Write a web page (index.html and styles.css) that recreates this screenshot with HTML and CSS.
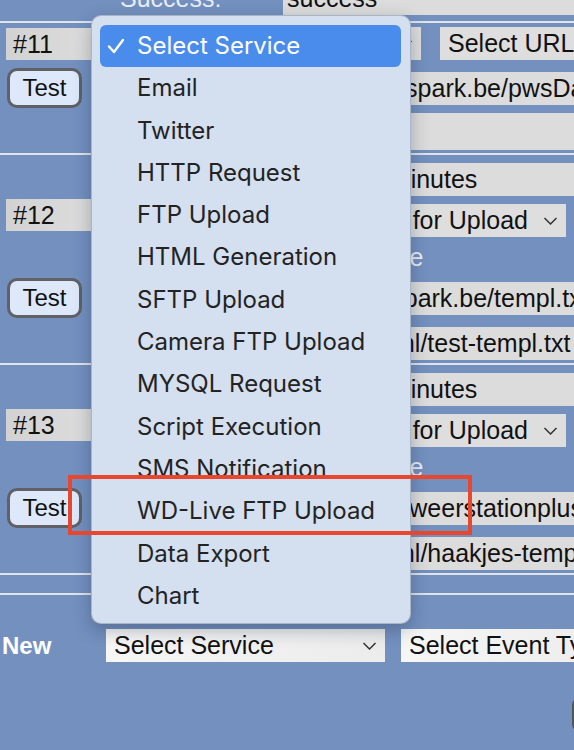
FILE: index.html
```html
<!DOCTYPE html>
<html lang="en">
<head>
  <meta charset="UTF-8">
  <title>Services</title>
  <link rel="stylesheet" href="styles.css">
</head>
<body>
  <div class="page">
    <div class="row row-top">
      <div class="side"></div>
      <div class="main">
        <span class="label">Success:</span>
        <span class="field">success</span>
      </div>
    </div>
    <div class="sep first"></div>

    <!-- #11 : service not chosen yet -->
    <section class="entry">
      <div class="row row-head">
        <div class="side"><span class="num">#11</span></div>
        <div class="main inline">
          <div class="select" style="width: 315px">Select Service
            <svg viewBox="0 0 14 8"><polyline points="1,1 7,7 13,1"/></svg></div>
          <div class="select" style="width: 200px">Select URL
            <svg viewBox="0 0 14 8"><polyline points="1,1 7,7 13,1"/></svg></div>
        </div>
      </div>
      <div class="row row-test">
        <div class="side"><button class="test">Test</button></div>
        <div class="main"><span class="field">ftp://meteospark.be/pwsDashboard/</span></div>
      </div>
      <div class="row row-blank">
        <div class="side"></div>
        <div class="main"><span class="field blank"></span></div>
      </div>
    </section>
    <div class="sep"></div>

    <section class="entry">
      <div class="row row-interval">
        <div class="side"></div>
        <div class="main">
          <span class="label">Interval:</span>
          <span class="field">every 10 minutes</span>
        </div>
      </div>
      <div class="row row-head tall">
        <div class="side"><span class="num">#12</span></div>
        <div class="main inline">
          <div class="select" style="width: 156px">FTP Upload
            <svg viewBox="0 0 14 8"><polyline points="1,1 7,7 13,1"/></svg></div>
          <div class="select" style="width: 285px">Select File for Upload
            <svg viewBox="0 0 14 8"><polyline points="1,1 7,7 13,1"/></svg></div>
        </div>
      </div>
      <div class="row row-note">
        <div class="side"></div>
        <div class="main"><span class="note">Template file</span></div>
      </div>
      <div class="row row-test">
        <div class="side"><button class="test">Test</button></div>
        <div class="main"><span class="field">ftp.meteospark.be/templ.txt</span></div>
      </div>
      <div class="row row-file">
        <div class="side"></div>
        <div class="main"><span class="field">/pi/web/html/test-templ.txt</span></div>
      </div>
    </section>
    <div class="sep"></div>

    <section class="entry">
      <div class="row row-interval">
        <div class="side"></div>
        <div class="main">
          <span class="label">Interval:</span>
          <span class="field">every 15 minutes</span>
        </div>
      </div>
      <div class="row row-head tall">
        <div class="side"><span class="num">#13</span></div>
        <div class="main inline">
          <div class="select" style="width: 156px">FTP Upload
            <svg viewBox="0 0 14 8"><polyline points="1,1 7,7 13,1"/></svg></div>
          <div class="select" style="width: 285px">Select File for Upload
            <svg viewBox="0 0 14 8"><polyline points="1,1 7,7 13,1"/></svg></div>
        </div>
      </div>
      <div class="row row-note">
        <div class="side"></div>
        <div class="main"><span class="note">Template file</span></div>
      </div>
      <div class="row row-test">
        <div class="side"><button class="test">Test</button></div>
        <div class="main"><span class="field">http://www.weerstationplus.be/upload/</span></div>
      </div>
      <div class="row row-file">
        <div class="side"></div>
        <div class="main"><span class="field">/pi/web/html/haakjes-template.txt</span></div>
      </div>
    </section>
    <div class="sep"></div>
    <div class="sep last"></div>

    <div class="row row-new">
      <div class="side"><span class="new">New</span></div>
      <div class="main inline gap-new">
        <div class="select light" style="width: 279px">Select Service
          <svg viewBox="0 0 14 8"><polyline points="1,1 7,7 13,1"/></svg></div>
        <div class="select light" style="width: 220px">Select Event Type</div>
      </div>
    </div>
    <div class="actions"><button class="test add">Add</button></div>
  </div>

  <!-- open service popup -->
  <ul class="menu">
    <li class="current">
      <svg class="check" viewBox="0 0 18 16"><polyline points="2,8.5 7,14 16,2"/></svg>
      Select Service
    </li>
    <li>Email</li>
    <li>Twitter</li>
    <li>HTTP Request</li>
    <li>FTP Upload</li>
    <li>HTML Generation</li>
    <li>SFTP Upload</li>
    <li>Camera FTP Upload</li>
    <li>MYSQL Request</li>
    <li>Script Execution</li>
    <li>SMS Notification</li>
    <li>WD-Live FTP Upload</li>
    <li>Data Export</li>
    <li>Chart</li>
  </ul>

  <div class="callout"></div>
</body>
</html>
```

FILE: styles.css
```css
:root {
  --page-blue: #7390bf;
  --field-grey: #dcdcdc;
  --label-color: #e8edf6;
  --line-color: #dfe3ea;
  --menu-bg: #d4dfef;
  --accent: #4a8cec;
}

* {
  box-sizing: border-box;
  margin: 0;
  padding: 0;
}

html, body {
  width: 574px;
  height: 750px;
  overflow: hidden;
}

body {
  position: relative;
  font-family: "Liberation Sans", Arial, sans-serif;
  font-size: 25px;
  color: #111;
  background-color: var(--page-blue);
}

.page {
  margin-top: -18px;
}

.row {
  display: flex;
}

.side {
  flex: none;
  width: 100px;
  display: flex;
  align-items: center;
}

.main {
  flex: 1;
  min-width: 0;
  display: grid;
  grid-template-columns: 183px 300px;
  align-items: center;
}

.main.inline {
  display: flex;
  gap: 19px;
  padding-left: 6px;
  align-items: flex-end;
}

.main.gap-new {
  gap: 16px;
}

.label {
  grid-column: 1;
  padding-left: 20px;
  color: var(--label-color);
  white-space: nowrap;
}

.note {
  grid-column: 2;
  color: var(--label-color);
  white-space: nowrap;
}

.field {
  grid-column: 2;
  width: 300px;
  height: 33px;
  line-height: 33px;
  padding: 0 4px;
  background-color: var(--field-grey);
  white-space: nowrap;
  overflow: hidden;
}

.field.blank {
  height: 37px;
}

.num {
  width: 90px;
  height: 32px;
  margin-left: 6px;
  padding-left: 7px;
  line-height: 32px;
  background: linear-gradient(to right, #d2d2d2, #dddddd);
}

.select {
  flex: none;
  display: flex;
  align-items: center;
  justify-content: space-between;
  height: 33px;
  padding: 0 8px 0 8px;
  background-color: #dedede;
  white-space: nowrap;
  overflow: hidden;
}

.select svg {
  flex: none;
  width: 15px;
  height: 8px;
  fill: none;
  stroke: #333;
  stroke-width: 1.5;
}

.select.light {
  background: linear-gradient(to right, #f6f6f6, #ececec);
}

.test {
  width: 75px;
  height: 40px;
  margin-left: 7px;
  border: 3px solid #5f6166;
  border-radius: 10px;
  background-color: #dde9fb;
  font-family: inherit;
  font-size: 24px;
  color: #111;
}

.sep {
  height: 2px;
  margin-top: 3px;
  background-color: var(--line-color);
}

.sep.first {
  margin-top: 6px;
}

.sep.last {
  margin-top: 18px;
}

/* row heights */
.row-top { height: 33px; }
.row-head { height: 33px; margin-top: 4px; }
.row-test { height: 40px; margin-top: 8px; }
.row-blank { height: 37px; margin-top: 5px; }

.row-interval { height: 33px; margin-top: 8px; }
.row-head.tall { height: 38px; margin-top: 3px; }
.row-head.tall .side { align-items: flex-start; }
.row-note { height: 41px; line-height: 41px; }
.row-note + .row-test { margin-top: 0; }
.row-file { height: 33px; margin-top: 9px; }

.row-new {
  height: 33px;
  margin-top: 34px;
}

.new {
  padding-left: 2px;
  font-size: 24px;
  font-weight: bold;
  color: #fff;
}

.actions {
  margin-top: 35px;
  padding-left: 565px;
}

.test.add {
  width: 90px;
  height: 35px;
  border-color: #555;
  border-radius: 8px;
}

/* popup menu */
.menu {
  position: absolute;
  left: 91px;
  top: 15px;
  width: 320px;
  height: 609px;
  padding: 9px 9px 8px 8px;
  list-style: none;
  background-color: var(--menu-bg);
  border: 1px solid rgba(70, 85, 110, 0.3);
  border-radius: 10px;
  box-shadow: 0 6px 18px rgba(20, 30, 50, 0.3);
  font-family: Inter, "Liberation Sans", sans-serif;
  font-size: 24px;
  color: #232323;
}

.menu li {
  position: relative;
  height: 42.3px;
  line-height: 42.3px;
  padding-left: 37px;
  border-radius: 6px;
  white-space: nowrap;
}

.menu li.current {
  background-color: var(--accent);
  color: #fff;
}

.check {
  position: absolute;
  left: 7px;
  top: 13px;
  width: 18px;
  height: 16px;
  fill: none;
  stroke: #fff;
  stroke-width: 2.4;
  stroke-linecap: round;
  stroke-linejoin: round;
}

.callout {
  position: absolute;
  left: 68px;
  top: 475px;
  width: 404px;
  height: 60px;
  border: 4px solid #e8462d;
}
```
